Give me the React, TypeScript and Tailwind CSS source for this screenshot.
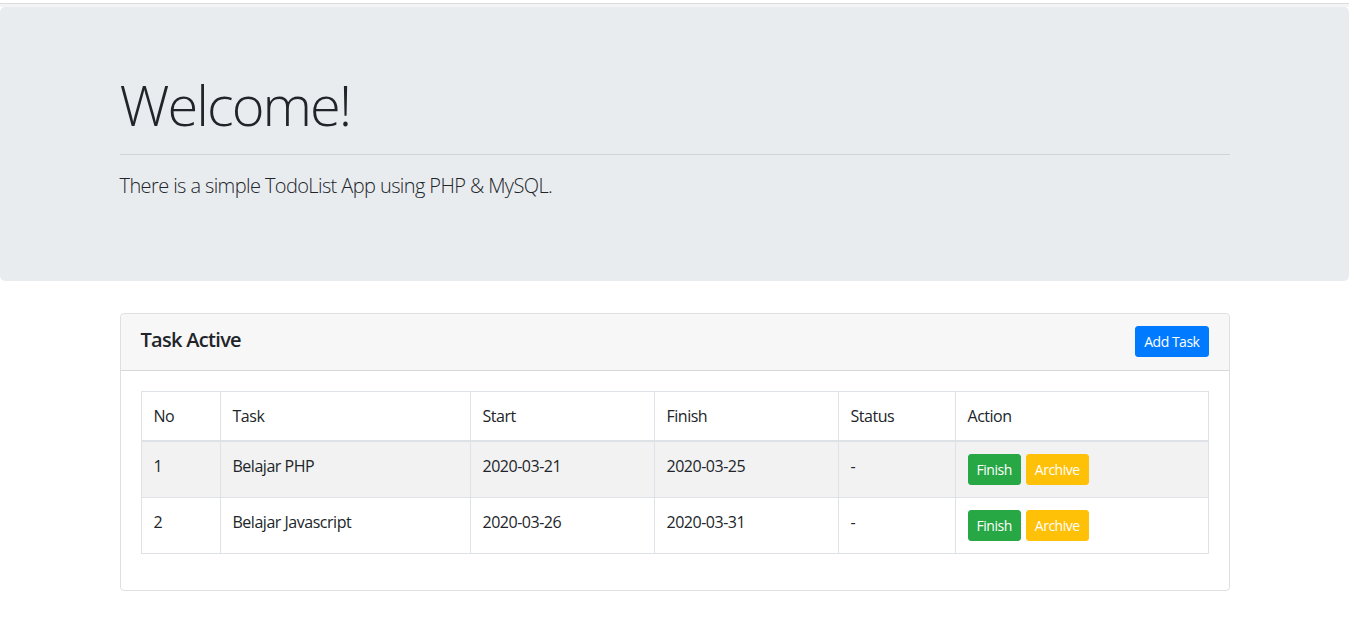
import React from "react";

type Task = {
  no: number;
  name: string;
  start: string;
  finish: string;
  status: string;
};

const tasks: Task[] = [
  { no: 1, name: "Belajar PHP", start: "2020-03-21", finish: "2020-03-25", status: "-" },
  { no: 2, name: "Belajar Javascript", start: "2020-03-26", finish: "2020-03-31", status: "-" },
];

const App = () => {
  return (
    <div className="min-h-screen bg-white text-[#212529] font-['Open_Sans',sans-serif] tracking-[-0.03em]">
      {/* thin strip above the jumbotron */}
      <div className="h-[3px] bg-white" />
      <div className="h-px bg-[#dcdcdc]" />
      <div className="h-[3px] bg-[#f3f4f5]" />

      {/* Jumbotron */}
      <div className="bg-[#e9ecef] rounded-[5px] py-16 mb-8">
        <div className="w-[1110px] mx-auto">
          <h1 className="text-[56px] font-light leading-[67.2px] tracking-[-0.035em]">Welcome!</h1>
          <hr className="my-4 border-t border-black/10" />
          <p className="text-xl font-light leading-[30px] mb-4 tracking-[-0.03em]">
            There is a simple TodoList App using PHP &amp; MySQL.
          </p>
        </div>
      </div>

      {/* Card */}
      <div className="w-[1110px] mx-auto border border-black/[0.125] rounded">
        <div className="flex items-center justify-between px-5 pt-3 pb-[13px] bg-[#f7f7f7] border-b border-black/[0.125] rounded-t">
          <h5 className="text-xl font-semibold leading-6 tracking-[-0.035em] mb-1">Task Active</h5>
          <button className="h-[31px] px-2 text-sm leading-[21px] text-white bg-[#007bff] border border-[#007bff] rounded-[3px]">
            Add Task
          </button>
        </div>
        <div className="p-5">
          <table className="w-full border-collapse mb-4 text-base">
            <thead>
              <tr>
                <th className="w-[79px] p-3 text-left align-bottom font-normal leading-6 border border-[#dee2e6] border-b-2">No</th>
                <th className="w-[250px] p-3 text-left align-bottom font-normal leading-6 border border-[#dee2e6] border-b-2">Task</th>
                <th className="w-[184px] p-3 text-left align-bottom font-normal leading-6 border border-[#dee2e6] border-b-2">Start</th>
                <th className="w-[184px] p-3 text-left align-bottom font-normal leading-6 border border-[#dee2e6] border-b-2">Finish</th>
                <th className="w-[117px] p-3 text-left align-bottom font-normal leading-6 border border-[#dee2e6] border-b-2">Status</th>
                <th className="p-3 text-left align-bottom font-normal leading-6 border border-[#dee2e6] border-b-2">Action</th>
              </tr>
            </thead>
            <tbody>
              {tasks.map((t, i) => (
                <tr key={t.no} className={i % 2 === 0 ? "bg-[#f2f2f2]" : "bg-white"}>
                  <td className="p-3 align-top leading-6 border border-[#dee2e6]">{t.no}</td>
                  <td className="p-3 align-top leading-6 border border-[#dee2e6]">{t.name}</td>
                  <td className="p-3 align-top leading-6 border border-[#dee2e6]">{t.start}</td>
                  <td className="p-3 align-top leading-6 border border-[#dee2e6]">{t.finish}</td>
                  <td className="p-3 align-top leading-6 border border-[#dee2e6]">{t.status}</td>
                  <td className="p-3 align-top leading-6 border border-[#dee2e6]">
                    <div className="flex gap-[5px]">
                      <button className="h-[31px] px-2 text-sm leading-[21px] text-white bg-[#28a745] border border-[#28a745] rounded-[3px]">
                        Finish
                      </button>
                      <button className="h-[31px] px-2 text-sm leading-[21px] text-white bg-[#ffc107] border border-[#ffc107] rounded-[3px]">
                        Archive
                      </button>
                    </div>
                  </td>
                </tr>
              ))}
            </tbody>
          </table>
        </div>
      </div>
    </div>
  );
};

export default App;
